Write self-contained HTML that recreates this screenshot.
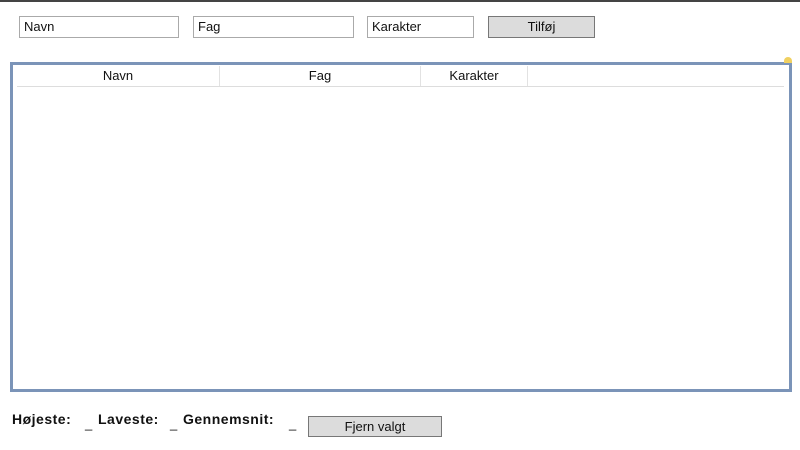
<!DOCTYPE html>
<html><head><style>
body{margin:0;width:800px;height:450px;background:#fff;position:relative;overflow:hidden;font-family:"Liberation Sans",sans-serif;font-size:13px;color:#111}
.a{position:absolute;box-sizing:border-box}
.in{border:1px solid #aaa;background:#fff;padding:2px 4px;line-height:15px;height:22px}
.btn{border:1px solid #777;background:#dcdcdc;text-align:center;line-height:19px;height:22px}
.h{top:66px;height:20px;line-height:20px;text-align:center;border-right:1px solid #e2e2e2}
.b{font-weight:bold;top:411px;font-size:14px;letter-spacing:0.5px;white-space:nowrap}
.u{top:416px}
</style></head><body>
<div class="a" style="left:0;top:0;width:800px;height:2px;background:#444"></div>
<div class="a in" style="left:19px;top:16px;width:160px">Navn</div>
<div class="a in" style="left:193px;top:16px;width:161px">Fag</div>
<div class="a in" style="left:367px;top:16px;width:107px">Karakter</div>
<div class="a btn" style="left:488px;top:16px;width:107px">Tilføj</div>
<div class="a" style="left:10px;top:62px;width:782px;height:330px;border:3px solid #7b94b8"></div>
<div class="a h" style="left:17px;width:203px">Navn</div>
<div class="a h" style="left:220px;width:201px">Fag</div>
<div class="a h" style="left:421px;width:107px">Karakter</div>
<div class="a" style="left:17px;top:86px;width:767px;height:1px;background:#ddd"></div>
<div class="a" style="left:784px;top:57px;width:8px;height:6px;border-radius:4px 4px 0 0;background:#f0d060"></div>
<div class="a b" style="left:12px">Højeste:</div>
<div class="a u" style="left:85px">_</div>
<div class="a b" style="left:98px">Laveste:</div>
<div class="a u" style="left:170px">_</div>
<div class="a b" style="left:183px">Gennemsnit:</div>
<div class="a u" style="left:289px">_</div>
<div class="a btn" style="left:308px;top:416px;width:134px;height:21px">Fjern valgt</div>
</body></html>
